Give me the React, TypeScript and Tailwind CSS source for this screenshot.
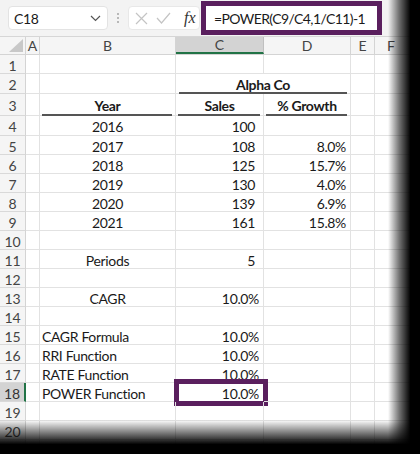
import React from "react";

type Cell = { v?: string; align?: "l" | "c" | "r"; bold?: boolean; pad?: string; under?: boolean };

const rows: { n: number; h: string; b?: Cell; c?: Cell; d?: Cell; merged?: Cell }[] = [
  { n: 1, h: "h-[19px]" },
  { n: 2, h: "h-[20px]", merged: { v: "Alpha Co", bold: true } },
  { n: 3, h: "h-[22px]", b: { v: "Year", align: "c", bold: true, under: true }, c: { v: "Sales", align: "c", bold: true, under: true }, d: { v: "% Growth", align: "c", bold: true, under: true } },
  { n: 4, h: "h-[20px]", b: { v: "2016", align: "c" }, c: { v: "100", align: "r", pad: "pr-[8px]" } },
  { n: 5, h: "h-[19px]", b: { v: "2017", align: "c" }, c: { v: "108", align: "r", pad: "pr-[8px]" }, d: { v: "8.0%", align: "r" } },
  { n: 6, h: "h-[19px]", b: { v: "2018", align: "c" }, c: { v: "125", align: "r", pad: "pr-[8px]" }, d: { v: "15.7%", align: "r" } },
  { n: 7, h: "h-[19px]", b: { v: "2019", align: "c" }, c: { v: "130", align: "r", pad: "pr-[8px]" }, d: { v: "4.0%", align: "r" } },
  { n: 8, h: "h-[19px]", b: { v: "2020", align: "c" }, c: { v: "139", align: "r", pad: "pr-[8px]" }, d: { v: "6.9%", align: "r" } },
  { n: 9, h: "h-[19px]", b: { v: "2021", align: "c" }, c: { v: "161", align: "r", pad: "pr-[8px]" }, d: { v: "15.8%", align: "r" } },
  { n: 10, h: "h-[19px]" },
  { n: 11, h: "h-[19px]", b: { v: "Periods", align: "c" }, c: { v: "5", align: "r", pad: "pr-[8px]" } },
  { n: 12, h: "h-[19px]" },
  { n: 13, h: "h-[19px]", b: { v: "CAGR", align: "c" }, c: { v: "10.0%", align: "r" } },
  { n: 14, h: "h-[19px]" },
  { n: 15, h: "h-[19px]", b: { v: "CAGR Formula", align: "l" }, c: { v: "10.0%", align: "r" } },
  { n: 16, h: "h-[19px]", b: { v: "RRI Function", align: "l" }, c: { v: "10.0%", align: "r" } },
  { n: 17, h: "h-[19px]", b: { v: "RATE Function", align: "l" }, c: { v: "10.0%", align: "r" } },
  { n: 18, h: "h-[19px]", b: { v: "POWER Function", align: "l" }, c: { v: "10.0%", align: "r" } },
  { n: 19, h: "h-[19px]" },
  { n: 20, h: "h-[19px]" },
];

function CellView({ cell, w }: { cell?: Cell; w: string }) {
  const align = cell?.align === "c" ? "justify-center" : cell?.align === "r" ? "justify-end" : "justify-start";
  const pad = cell?.pad ?? (cell?.align === "r" ? "pr-[4px]" : cell?.align === "l" ? "pl-[2px]" : "");
  return (
    <div className={`${w} shrink-0 h-full border-r border-b border-[#e2e2e2] relative flex items-center pt-[2px] ${align} ${pad}`}>
      {cell?.v && <span className={cell.bold ? "font-bold" : ""}>{cell.v}</span>}
      {cell?.under && <div className="absolute left-[2px] right-[3px] bottom-[-1px] h-[2px] bg-[#555]" />}
    </div>
  );
}

function EmptyRow() {
  return (
    <div className="h-[19px] flex">
      <div className="w-[26px] shrink-0 h-full bg-[#f5f5f5] border-r border-[#d4d4d4]" />
      <div className="w-[14px] shrink-0 h-full border-r border-[#e2e2e2]" />
      <div className="w-[136px] shrink-0 h-full border-r border-[#e2e2e2]" />
      <div className="w-[88px] shrink-0 h-full border-r border-[#e2e2e2]" />
      <div className="w-[87px] shrink-0 h-full border-r border-[#e2e2e2]" />
      <div className="w-[24px] shrink-0 h-full border-r border-[#e2e2e2]" />
      <div className="flex-1 h-full" />
    </div>
  );
}

export default function App() {
  return (
    <div className="relative w-[420px] h-[454px] overflow-hidden bg-white text-[#1a1a1a]" style={{ fontFamily: "Lato, 'Open Sans', sans-serif" }}>
      {/* Top formula bar */}
      <div className="h-[37px] bg-[#f3f3f3] flex items-center border-b border-[#d6d6d6]">
        <div className="ml-[8px] w-[100px] h-[24px] bg-white rounded-[4px] border border-[#e3e3e3] flex items-center justify-between pl-[5px] pr-[6px] text-[14px] tracking-[-0.3px]">
          <span>C18</span>
          <svg width="11" height="7" viewBox="0 0 11 7"><path d="M1 1 L5.5 5.5 L10 1" fill="none" stroke="#555" strokeWidth="1.2" /></svg>
        </div>
        <div className="w-[20px] flex flex-col items-center gap-[2px]">
          <span className="w-[2px] h-[2px] bg-[#b8b8b8]" />
          <span className="w-[2px] h-[2px] bg-[#b8b8b8]" />
          <span className="w-[2px] h-[2px] bg-[#b8b8b8]" />
        </div>
        <div className="w-[72px] h-[24px] bg-white rounded-[4px] border border-[#e8e8e8] flex items-center pl-[6px] gap-[8px]">
          <svg width="13" height="13" viewBox="0 0 13 13"><path d="M1 1 L12 12 M12 1 L1 12" stroke="#c4c4c4" strokeWidth="1.2" /></svg>
          <svg width="15" height="12" viewBox="0 0 15 12"><path d="M1 6 L5.5 11 L14 1" fill="none" stroke="#c4c4c4" strokeWidth="1.2" /></svg>
          <span className="text-[16px] italic text-[#333] ml-[5px]" style={{ fontFamily: "'Liberation Serif', serif" }}>fx</span>
        </div>
        <div className="ml-[1px] h-[34px] w-[181px] border-[5px] border-[#5a1f5e] bg-white flex items-center pl-[8px] text-[14px] tracking-[-0.6px] text-[#1a1a1a] whitespace-nowrap">
          =POWER(C9/C4,1/C11)-1
        </div>
      </div>

      {/* Column headers */}
      <div className="h-[18px] flex text-[14px] text-[#444] bg-[#f5f5f5] border-b border-[#d4d4d4]">
        <div className="w-[26px] shrink-0 h-full border-r border-[#d4d4d4] relative">
          <svg className="absolute right-[2px] bottom-[2px]" width="14" height="13" viewBox="0 0 14 13"><polygon points="14,0 14,13 0,13" fill="#c8c8c8" /></svg>
        </div>
        <div className="w-[14px] shrink-0 h-full border-r border-[#d4d4d4] flex items-center justify-center">A</div>
        <div className="w-[136px] shrink-0 h-full border-r border-[#d4d4d4] flex items-center justify-center">B</div>
        <div className="w-[88px] shrink-0 h-full border-r border-[#c0c0c0] bg-[#d3d3d3] border-b-2 border-b-[#217346] flex items-center justify-center">C</div>
        <div className="w-[87px] shrink-0 h-full border-r border-[#d4d4d4] flex items-center justify-center">D</div>
        <div className="w-[24px] shrink-0 h-full border-r border-[#d4d4d4] flex items-center justify-center">E</div>
        <div className="flex-1 h-full flex items-center pl-[12px]">F</div>
      </div>

      {/* Grid */}
      <div className="text-[14px] tracking-[-0.35px]">
        {rows.map((r) => (
          <div key={r.n} className={`${r.h} flex`}>
            <div className={`w-[26px] shrink-0 h-full border-b border-[#d9d9d9] flex items-center pt-[2px] justify-center text-[14px] tracking-normal ${r.n === 18 ? "bg-[#d3d3d3] border-r-2 border-r-[#217346] text-[#333]" : "bg-[#f5f5f5] border-r border-r-[#d4d4d4] text-[#444]"}`}>
              {r.n}
            </div>
            <CellView w="w-[14px]" />
            <CellView w="w-[136px]" cell={r.b} />
            {r.merged ? (
              <div className="w-[175px] shrink-0 h-full border-r border-b border-[#e2e2e2] relative flex items-center pt-[2px] justify-center">
                <span className="font-bold">{r.merged.v}</span>
                <div className="absolute left-[3px] right-[3px] bottom-[-1px] h-[2px] bg-[#555]" />
              </div>
            ) : (
              <>
                {r.n === 18 ? (
                  <div className="w-[88px] shrink-0 h-full border-r border-b border-[#e2e2e2] relative flex items-center pt-[2px] justify-end pr-[4px]">
                    <span>{r.c?.v}</span>
                    <div className="absolute left-[-2px] right-[-5px] top-[-4px] bottom-[-5px] border-[5px] border-[#5a1f5e]" />
                  </div>
                ) : (
                  <CellView w="w-[88px]" cell={r.c} />
                )}
                <CellView w="w-[87px]" cell={r.d} />
              </>
            )}
            <CellView w="w-[24px]" />
            <div className="flex-1 h-full border-b border-[#e2e2e2]" />
          </div>
        ))}
        <EmptyRow />
      </div>

      {/* Shadows */}
      <div className="absolute top-0 bottom-0 right-0 w-[32px] bg-[linear-gradient(to_right,rgba(0,0,0,0)_0%,rgba(0,0,0,0.55)_35%,#000_70%)]" />
      <div className="absolute left-0 right-0 bottom-0 h-[34px] bg-[linear-gradient(to_bottom,rgba(0,0,0,0)_0%,rgba(0,0,0,0.55)_40%,#000_72%)]" />
    </div>
  );
}
